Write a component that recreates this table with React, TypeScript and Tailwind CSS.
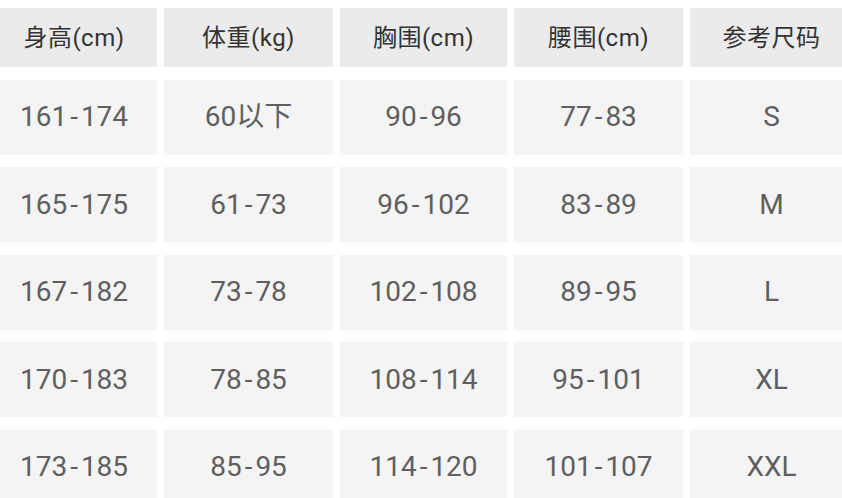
import React from 'react';

const headers = ['身高(cm)', '体重(kg)', '胸围(cm)', '腰围(cm)', '参考尺码'];

const rows: string[][] = [
  ['161-174', '60以下', '90-96', '77-83', 'S'],
  ['165-175', '61-73', '96-102', '83-89', 'M'],
  ['167-182', '73-78', '102-108', '89-95', 'L'],
  ['170-183', '78-85', '108-114', '95-101', 'XL'],
  ['173-185', '85-95', '114-120', '101-107', 'XXL'],
];

const font = { fontFamily: 'Roboto, "Noto Sans CJK SC", sans-serif' };

// 连字符两侧留一点空隙，贴近原图的 DIN 风格
function Range({ value }: { value: string }) {
  const parts = value.split('-');
  if (parts.length !== 2) return <>{value}</>;
  return (
    <>
      {parts[0]}
      <span className="mx-[3px]">-</span>
      {parts[1]}
    </>
  );
}

export default function App() {
  return (
    <div className="w-[842px] h-[498px] overflow-hidden bg-white" style={font}>
      <div className="ml-[-9px] pt-[8px] grid grid-cols-[166px_169px_167px_169px_163px] gap-x-[7px] gap-y-[12.5px] w-max">
        {headers.map((h) => (
          <div
            key={h}
            className="h-[59px] bg-[#ebebeb] flex items-center justify-center text-[24px] tracking-[0.5px] text-[#333333]"
          >
            {h}
          </div>
        ))}
        {rows.map((r, i) =>
          r.map((c, j) => (
            <div
              key={`${i}-${j}`}
              className="h-[75px] bg-[#f4f4f4] flex items-center justify-center text-[28px] text-[#5f5f5f]"
            >
              <Range value={c} />
            </div>
          ))
        )}
      </div>
    </div>
  );
}
